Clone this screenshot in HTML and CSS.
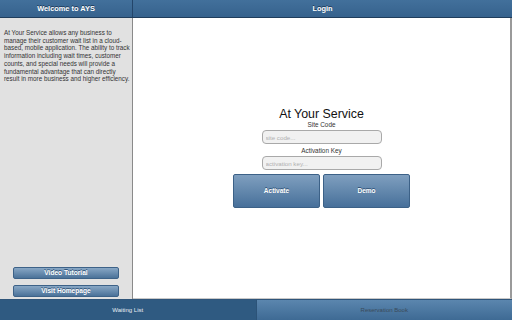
FILE: index.html
```html
<!DOCTYPE html>
<html lang="en">
<head>
    <meta charset="UTF-8">
    <meta name="viewport" content="width=device-width, initial-scale=1.0">
    <title>At Your Service</title>
    <link rel="stylesheet" href="styles.css">
</head>
<body>
    <div class="app">
        <div class="header">
            <div class="header-cell side">Welcome to AYS</div>
            <div class="header-cell main">Login</div>
        </div>

        <div class="body">
            <div class="sidebar">
                <p class="intro">
                    At Your Service allows any business to manage their customer wait list in a cloud-based, mobile application. The ability to track information including wait times, customer counts, and special needs will provide a fundamental advantage that can directly result in more business and higher efficiency.
                </p>
                <div class="side-buttons">
                    <a href="#" class="side-button">Video Tutorial</a>
                    <a href="#" class="side-button">Visit Homepage</a>
                </div>
            </div>

            <div class="content">
                <div class="login">
                    <h1>At Your Service</h1>
                    <label for="siteCode">Site Code</label>
                    <input id="siteCode" type="text" placeholder="site code...">
                    <label for="activationKey">Activation Key</label>
                    <input id="activationKey" type="text" placeholder="activation key...">
                    <div class="actions">
                        <a href="#" class="big-button">Activate</a>
                        <a href="#" class="big-button">Demo</a>
                    </div>
                </div>
            </div>
        </div>

        <div class="tabs">
            <a href="#" class="tab active">Waiting List</a>
            <a href="#" class="tab">Reservation Book</a>
        </div>
    </div>
</body>
</html>
```

FILE: styles.css
```css
html, body {
    margin: 0;
    padding: 0;
}
body {
    font-family: 'Liberation Sans', Arial, sans-serif;
    background-color: #ffffff;
    color: #222;
}
.app {
    width: 512px;
    height: 320px;
    display: flex;
    flex-direction: column;
}
.header {
    display: flex;
    height: 17px;
    background: linear-gradient(#42709b, #36628d);
    border-bottom: 1px solid #1f3d5c;
}
.header-cell {
    color: #fff;
    font-weight: bold;
    font-size: 7.4px;
    line-height: 17px;
    text-align: center;
    text-shadow: 0 -1px 0 #1d3a58;
}
.header-cell.side {
    width: 132px;
    border-right: 1px solid #23456a;
}
.header-cell.main {
    flex: 1;
}
.body {
    flex: 1;
    display: flex;
    min-height: 0;
}
.sidebar {
    width: 132px;
    background-color: #e1e1e1;
    border-right: 1px solid #8a8a8a;
    display: flex;
    flex-direction: column;
}
.intro {
    margin: 0;
    padding: 11px 2px 0 4px;
    font-size: 6.3px;
    line-height: 7.7px;
    color: #333;
}
.side-buttons {
    margin-top: auto;
    padding: 0 13px 2px 13px;
    display: flex;
    flex-direction: column;
    gap: 6px;
}
.side-button {
    display: block;
    height: 10px;
    line-height: 10px;
    border: 1px solid #3d6288;
    border-radius: 2px;
    background: linear-gradient(#88a7c5, #4b7299);
    color: #fff;
    font-weight: bold;
    font-size: 6.6px;
    text-align: center;
    text-decoration: none;
    text-shadow: 0 -1px 0 #2f5277;
}
.content {
    flex: 1;
    display: flex;
    align-items: center;
    justify-content: center;
    border-right: 2px solid #9a9a9a;
    border-bottom: 1px solid #c8c8c8;
}
.login {
    width: 177px;
    display: flex;
    flex-direction: column;
    align-items: center;
}
.login h1 {
    margin: 0;
    font-size: 12.4px;
    font-weight: normal;
    line-height: 13px;
    color: #111;
}
.login label {
    font-size: 6.4px;
    line-height: 8px;
    color: #333;
}
.login input {
    box-sizing: border-box;
    width: 120px;
    height: 14px;
    margin: 1px 0 3px;
    padding: 0 3px;
    border: 1px solid #a9a9a9;
    border-radius: 4px;
    background-color: #f1f1f1;
    font-family: 'Liberation Sans', Arial, sans-serif;
    font-size: 6.2px;
    color: #333;
}
.login input::placeholder {
    color: #b0b0b0;
}
.actions {
    display: flex;
    gap: 3px;
    margin-top: 1px;
}
.big-button {
    display: block;
    width: 85px;
    height: 32px;
    line-height: 32px;
    border: 1px solid #3c6187;
    border-radius: 2px;
    background: linear-gradient(#7f9fbf, #47709a);
    color: #fff;
    font-weight: bold;
    font-size: 6.5px;
    text-align: center;
    text-decoration: none;
    text-shadow: 0 -1px 0 #2f5277;
}
.tabs {
    display: flex;
    height: 21px;
}
.tab {
    flex: 1;
    line-height: 21px;
    text-align: center;
    font-size: 6px;
    text-decoration: none;
    color: #3a4a5a;
    background: linear-gradient(#5b86ae, #3e6a94);
    border-top: 1px solid #2f557a;
    border-left: 1px solid #2c5378;
}
.tab.active {
    color: #e8eef4;
    background: #2f5a81;
    border-left: none;
}
```
